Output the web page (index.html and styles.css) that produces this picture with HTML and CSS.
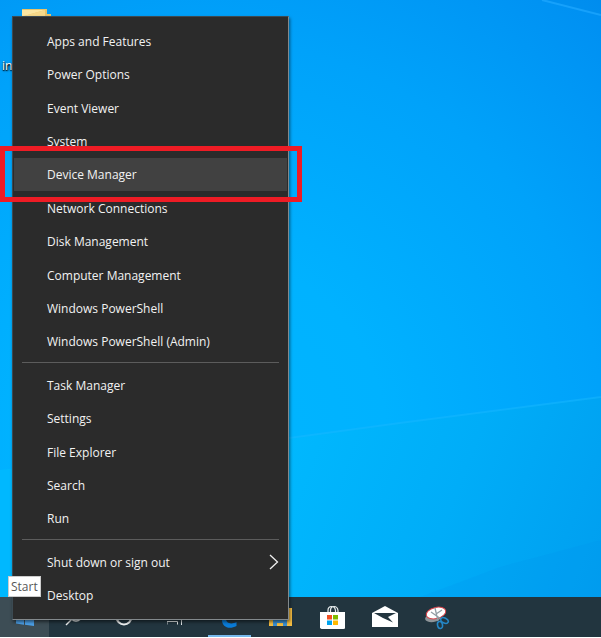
FILE: index.html
```
<!DOCTYPE html>
<html lang="en">
	<head>
		<meta charset="utf-8">
		<title>Desktop</title>
		<link rel="stylesheet" href="styles.css">
	</head>
	<body>
		<main class="desktop">
			<svg class="wallpaper" viewBox="0 0 601 597" preserveAspectRatio="none" aria-hidden="true">
				<defs>
					<radialGradient id="glow" gradientUnits="userSpaceOnUse" cx="200" cy="440" r="620">
						<stop offset="0" stop-color="#00b6ff"/>
						<stop offset=".3" stop-color="#00b2ff"/>
						<stop offset=".65" stop-color="#00a2fa"/>
						<stop offset="1" stop-color="#008cf0"/>
					</radialGradient>
					<linearGradient id="floor" gradientUnits="userSpaceOnUse" x1="289" y1="430" x2="620" y2="560">
						<stop offset="0" stop-color="#00b8fe"/>
						<stop offset=".5" stop-color="#00adf8"/>
						<stop offset="1" stop-color="#009eef"/>
					</linearGradient>
				</defs>
				<path fill="url(#glow)" d="M0 0h601v597H0z"/>
				<path fill="url(#floor)" d="M0 470L289 438L400 423L601 397V597H0z"/>
				<path fill="none" stroke="#18b8ff" stroke-opacity=".5" stroke-width="2" d="M289 438L400 423L601 397"/>
				<path fill="#0090e8" fill-opacity=".15" d="M420 597L500 567L601 540V597z"/>
				<path fill="#0088e8" fill-opacity=".2" d="M542 0L601 15V0z"/>
				<path fill="none" stroke="#20a8ff" stroke-opacity=".7" stroke-width="2" d="M542 0L601 15"/>
			</svg>

			<a class="shortcut" href="#">
				<svg width="32" height="46" viewBox="0 0 32 46" aria-hidden="true">
					<path fill="#e9c46a" d="M1 0h25v5h4v40H1z"/>
					<path fill="#fbe6a2" d="M1 1h23L3 7H1z"/>
					<path fill="#f6d98a" d="M3 7L24 1v44H3z"/>
				</svg>
				<span>in</span>
			</a>

			<nav class="menu">
				<ul class="group group-main">
					<li><button type="button">Apps and Features</button></li>
					<li><button type="button">Power Options</button></li>
					<li><button type="button">Event Viewer</button></li>
					<li><button type="button">System</button></li>
					<li class="active marked"><button type="button">Device Manager</button></li>
					<li><button type="button">Network Connections</button></li>
					<li><button type="button">Disk Management</button></li>
					<li><button type="button">Computer Management</button></li>
					<li><button type="button">Windows PowerShell</button></li>
					<li><button type="button">Windows PowerShell (Admin)</button></li>
				</ul>
				<hr>
				<ul class="group group-tools">
					<li><button type="button">Task Manager</button></li>
					<li><button type="button">Settings</button></li>
					<li><button type="button">File Explorer</button></li>
					<li><button type="button">Search</button></li>
					<li><button type="button">Run</button></li>
				</ul>
				<hr>
				<ul class="group group-session">
					<li>
						<button type="button">Shut down or sign out
							<svg width="10" height="16" viewBox="0 0 10 16" aria-hidden="true"><path fill="none" stroke="#f0f0f0" stroke-width="1.3" d="M1 1l7.5 7L1 15"/></svg>
						</button>
					</li>
					<li><button type="button">Desktop</button></li>
				</ul>
			</nav>
			<div class="tooltip" role="tooltip">Start</div>
		</main>

		<footer class="taskbar">
			<button class="start" type="button" aria-label="Start">
				<svg width="18" height="18" viewBox="0 0 18 18"><path fill="#4ca0e8" d="M0 2.5L8 1.300V8.500H0zM9 1.200L18 0v8.500H9zM0 9.500h8v7.200L0 15.500zM9 9.500h9V18l-9-1.200z"/></svg>
			</button>
			<button class="search" type="button" aria-label="Search">
				<svg width="18" height="18" viewBox="0 0 18 18"><g fill="none" stroke="#f2f4f5" stroke-width="1.500"><circle cx="11" cy="7" r="6"/><path d="M6.500 11.500L1 17"/></g></svg>
			</button>
			<button type="button" aria-label="Cortana">
				<svg width="18" height="18" viewBox="0 0 18 18"><circle cx="8" cy="9" r="7.500" fill="none" stroke="#f2f4f5" stroke-width="2"/></svg>
			</button>
			<button type="button" aria-label="Task View">
				<svg width="20" height="18" viewBox="0 0 20 18"><path fill="none" stroke="#e4e8ea" d="M0 16.500v-3h10.500v3M0 3.500h11v7H0zM14.500 1v16"/></svg>
			</button>
			<button class="running" type="button" aria-label="Edge">
				<svg width="20" height="22" viewBox="0 0 20 22"><path fill="#0a7cd8" d="M1 10C2 4 6 1 10.500 1 16 1 19 5 19 10v3H7c0 4 5 6 10.500 3v4C10 24 3 21 3 14c0-3 1-5 4-7-3 0-5 1-6 3zM7 9.500h6c0-4-5-4-6 0z"/></svg>
			</button>
			<button type="button" aria-label="File Explorer">
				<svg width="24" height="20" viewBox="0 0 24 20"><path fill="#f5bd42" d="M0 3h8l2-2h13v18H0z"/><path fill="#ffe08a" d="M2 5h18v6H2z"/><path fill="#3b8fd0" d="M4 11h14v8h-4v-3H8v3H4z"/></svg>
			</button>
			<button type="button" aria-label="Microsoft Store">
				<svg width="26" height="26" viewBox="0 0 26 26">
					<path fill="none" stroke="#e8edef" stroke-width="1.200" d="M8 9V6.500Q8 2.500 11.500 2.500T15.500 6.500V9M10.500 9V6.500Q10.500 2.500 14 2.500T18 6.500V9"/>
					<path fill="#fff" d="M0 8h25v16.500l-1.500.500H1.500L0 24z"/>
					<path fill="#f25022" d="M7 11h5v4.500H7z"/><path fill="#7fba00" d="M13 11h5v4.500h-5z"/>
					<path fill="#00a4ef" d="M7 16.500h5V21H7z"/><path fill="#ffb900" d="M13 16.500h5V21h-5z"/>
				</svg>
			</button>
			<button type="button" aria-label="Mail">
				<svg width="26" height="22" viewBox="0 0 26 22"><path fill="#fff" d="M0 7L13 0l13 7v14H0z"/><path fill="#22353f" d="M2 7h22l-8 4 5 5.500L11 12z"/></svg>
			</button>
			<button type="button" aria-label="Snipping Tool">
				<svg width="26" height="26" viewBox="0 0 26 26">
					<ellipse cx="9" cy="14" rx="8" ry="4" fill="#8f9599" transform="rotate(-8 9 14)"/>
					<ellipse cx="12" cy="9" rx="10" ry="5.500" fill="#fff" stroke="#d9434a" transform="rotate(-14 12 9)"/>
					<path fill="none" stroke="#929da4" stroke-width="1.300" d="M11 4l3 13M7 8l10 7M12 10l6-4"/>
					<g fill="none" stroke="#2487c8" stroke-width="1.500"><ellipse cx="20.500" cy="16.500" rx="4" ry="2.500" transform="rotate(25 20.500 16.500)"/><ellipse cx="16" cy="21" rx="2.500" ry="3.500" transform="rotate(-12 16 21)"/></g>
				</svg>
			</button>
		</footer>
	</body>
</html>
```
FILE: styles.css
```
*, *::before, *::after {
	margin: 0;
	padding: 0;
	box-sizing: border-box;
}
html {
	height: 100%;
}
body {
	height: 100%;
	display: flex;
	flex-direction: column;
	padding-bottom: 1px;
	background-color: #fff;
	font-family: "Open Sans", "Noto Sans", sans-serif;
	font-size: 12px;
	overflow: hidden;
}
button {
	border: 0;
	background: none;
	font: inherit;
	color: inherit;
}
svg {
	display: block;
}
.desktop {
	position: relative;
	flex: 1;
}
.wallpaper {
	position: absolute;
	width: 100%;
	height: 100%;
}

/* desktop shortcut */
.shortcut {
	position: absolute;
	left: 2px;
	top: 9px;
	color: #fff;
	line-height: 22px;
	text-decoration: none;
	text-shadow: 1px 1px 2px #000, 0 1px 1px #000;
}
.shortcut svg {
	margin-left: 19px;
}

/* start context menu */
.menu {
	position: absolute;
	z-index: 1;
	left: 12px;
	top: 16px;
	bottom: -23px;
	width: 277px;
	display: flex;
	flex-direction: column;
	padding: 7px 1px;
	background-color: #2b2b2b;
	border: 1px solid #83898c;
	border-left-color: #3c4a52;
	border-top-color: #3c4a52;
	box-shadow: 1px 2px 3px rgba(0,0,0,.5);
	color: #f2f2f2;
}
.group {
	list-style: none;
	display: flex;
	flex-direction: column;
}
.group-main {
	flex: 10;
}
.group-tools {
	flex: 5;
}
.group-session {
	flex: 2;
}
.group li {
	position: relative;
	flex: 1;
	display: flex;
}
.group button {
	flex: 1;
	display: flex;
	align-items: center;
	justify-content: space-between;
	padding: 1px 8px 0 33px;
	text-align: left;
}
.group button:hover, .group .active button {
	background-color: #414141;
}
.marked::after {
	content: "";
	position: absolute;
	z-index: 1;
	left: -14px;
	right: -15px;
	top: -12px;
	bottom: -11px;
	border: 5px solid #ee1c25;
	pointer-events: none;
}
.menu hr {
	height: 1px;
	margin: 4px 8px 5px;
	border: 0;
	background-color: #5c5c5c;
}
.tooltip {
	position: absolute;
	z-index: 2;
	left: 8px;
	bottom: 0;
	padding: 0 2px;
	background-color: #fff;
	border: 1px solid #ccc;
	color: #575757;
	line-height: 19px;
}

/* taskbar */
.taskbar {
	height: 40px;
	display: flex;
	background-color: #22353f;
}
.taskbar button {
	width: 52px;
	display: flex;
	align-items: center;
	justify-content: center;
}
.taskbar .start {
	width: 49px;
	background-color: #3d4d55;
}
.taskbar .search {
	width: 50px;
}
.taskbar .running {
	background: linear-gradient(#76b9ed, #76b9ed) center bottom / 43px 2px no-repeat;
}
```
